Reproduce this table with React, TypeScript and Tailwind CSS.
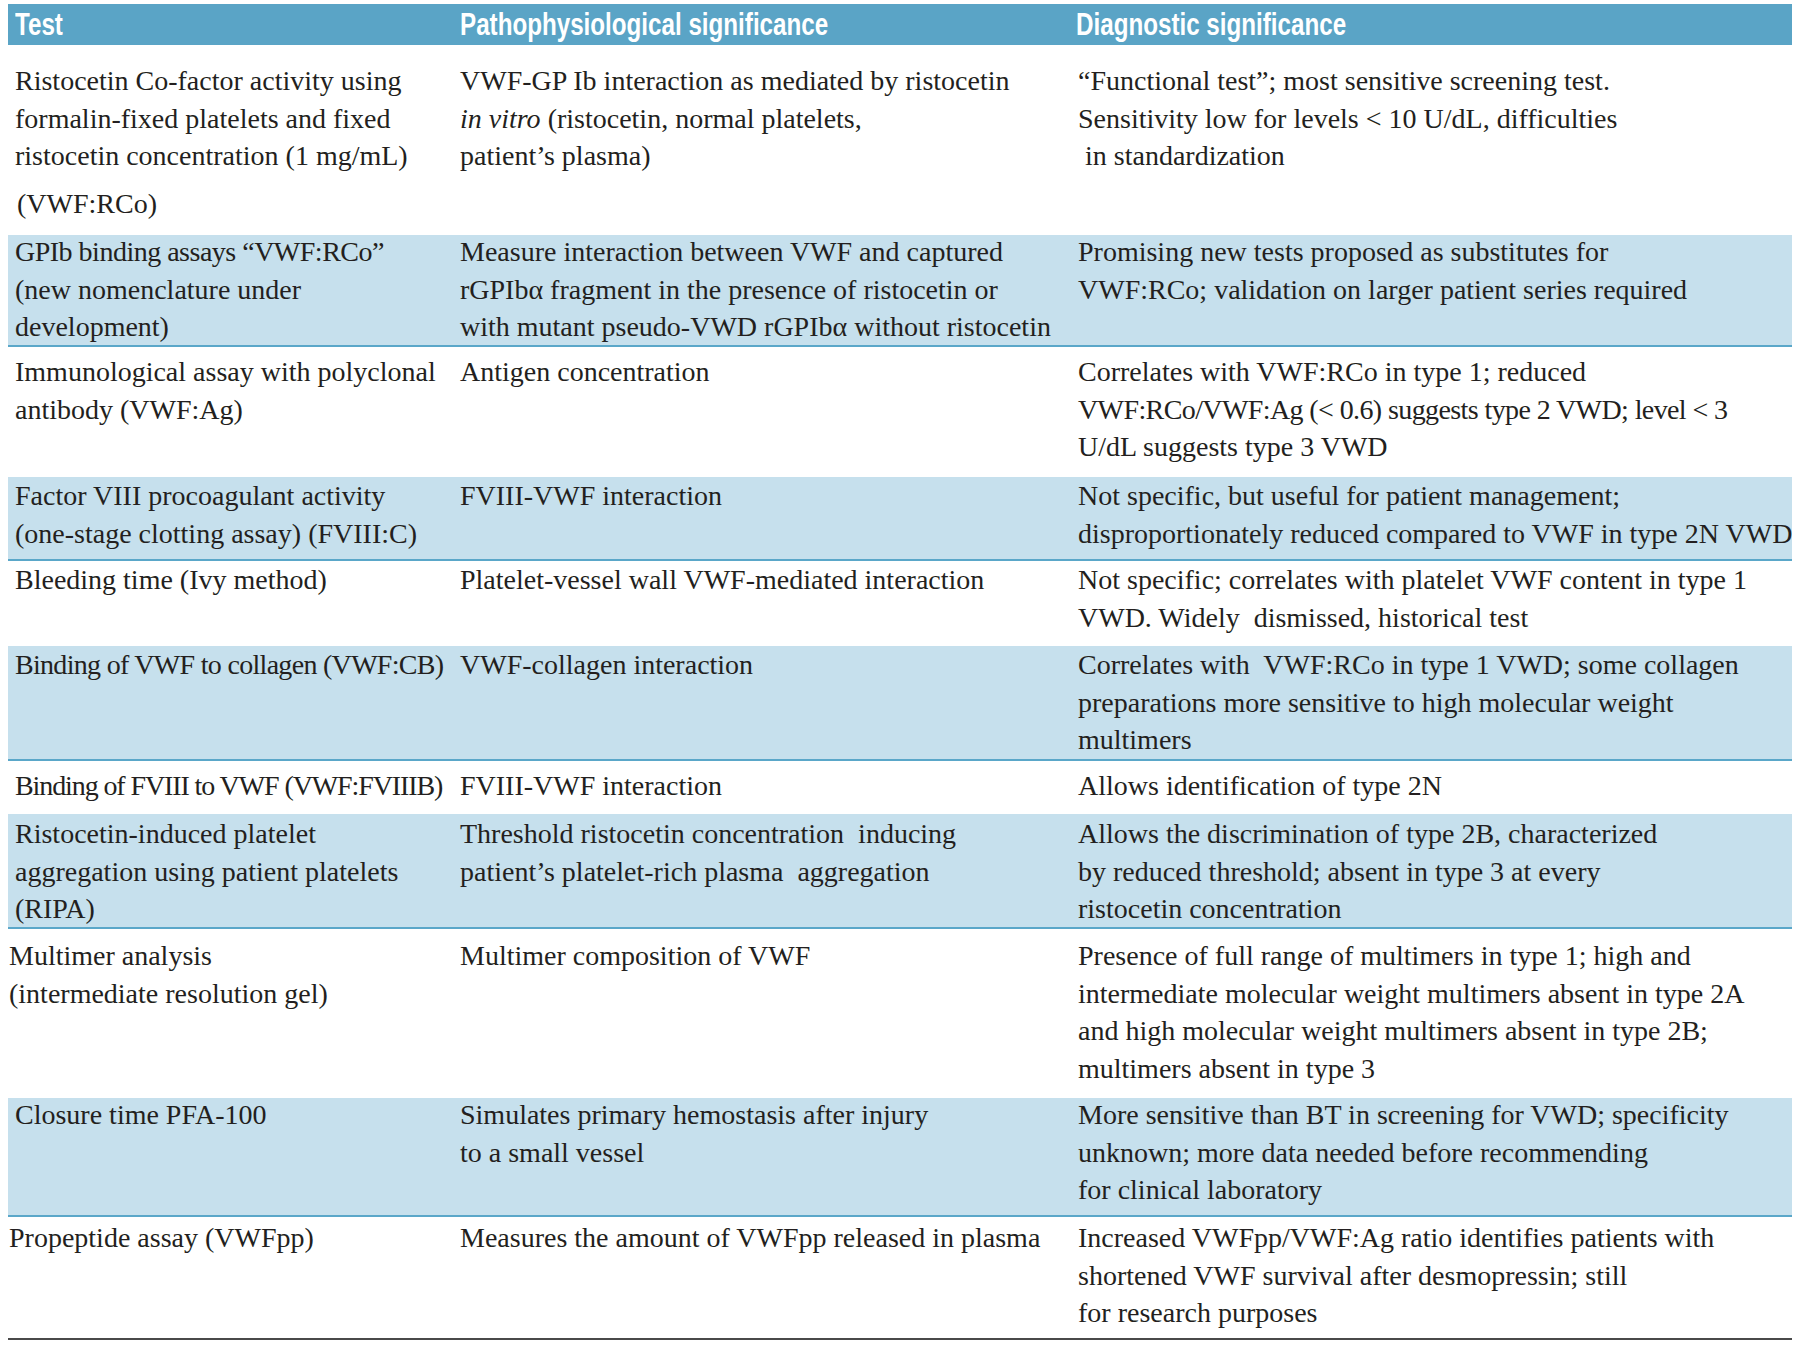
import React from "react";

type Row = {
  blue: boolean;
  h: string;
  pt: string;
  c1: React.ReactNode[];
  c2: React.ReactNode[];
  c3: React.ReactNode[];
  c1pl: string;
};

const rows: Row[] = [
  {
    blue: false,
    h: "h-[190px]",
    pt: "pt-[17px]",
    c1pl: "pl-[7px]",
    c1: [
      "Ristocetin Co-factor activity using",
      "formalin-fixed platelets and fixed",
      "ristocetin concentration (1 mg/mL)",
    ],
    c2: [
      "VWF-GP Ib interaction as mediated by ristocetin",
      <>
        <i>in vitro</i> (ristocetin, normal platelets,
      </>,
      "patient’s plasma)",
    ],
    c3: [
      "“Functional test”; most sensitive screening test.",
      "Sensitivity low for levels < 10 U/dL, difficulties",
      " in standardization",
    ],
  },
  {
    blue: true,
    h: "h-[112px]",
    pt: "-mt-[2px]",
    c1pl: "pl-[7px]",
    c1: [
      <span className="tracking-[-0.5px]">GPIb binding assays “VWF:RCo”</span>,
      "(new nomenclature under",
      "development)",
    ],
    c2: [
      "Measure interaction between VWF and captured",
      "rGPIbα fragment in the presence of ristocetin or",
      "with mutant pseudo-VWD rGPIbα without ristocetin",
    ],
    c3: [
      "Promising new tests proposed as substitutes for",
      "VWF:RCo; validation on larger patient series required",
    ],
  },
  {
    blue: false,
    h: "h-[130px]",
    pt: "pt-[6px]",
    c1pl: "pl-[7px]",
    c1: ["Immunological assay with polyclonal", "antibody (VWF:Ag)"],
    c2: ["Antigen concentration"],
    c3: [
      "Correlates with VWF:RCo in type 1; reduced",
      <span className="tracking-[-0.6px]">VWF:RCo/VWF:Ag (&lt; 0.6) suggests type 2 VWD; level &lt; 3</span>,
      "U/dL suggests type 3 VWD",
    ],
  },
  {
    blue: true,
    h: "h-[84px]",
    pt: "pt-[0px]",
    c1pl: "pl-[7px]",
    c1: ["Factor VIII procoagulant activity", "(one-stage clotting assay) (FVIII:C)"],
    c2: ["FVIII-VWF interaction"],
    c3: [
      "Not specific, but useful for patient management;",
      "disproportionately reduced compared to VWF in type 2N VWD",
    ],
  },
  {
    blue: false,
    h: "h-[85px]",
    pt: "pt-[0px]",
    c1pl: "pl-[7px]",
    c1: ["Bleeding time (Ivy method)"],
    c2: ["Platelet-vessel wall VWF-mediated interaction"],
    c3: [
      "Not specific; correlates with platelet VWF content in type 1",
      "VWD. Widely  dismissed, historical test",
    ],
  },
  {
    blue: true,
    h: "h-[115px]",
    pt: "pt-[0px]",
    c1pl: "pl-[7px]",
    c1: [<span className="tracking-[-0.7px]">Binding of VWF to collagen (VWF:CB)</span>],
    c2: ["VWF-collagen interaction"],
    c3: [
      "Correlates with  VWF:RCo in type 1 VWD; some collagen",
      "preparations more sensitive to high molecular weight",
      "multimers",
    ],
  },
  {
    blue: false,
    h: "h-[53px]",
    pt: "pt-[6px]",
    c1pl: "pl-[7px]",
    c1: [<span className="tracking-[-1.1px]">Binding of FVIII to VWF (VWF:FVIIIB)</span>],
    c2: ["FVIII-VWF interaction"],
    c3: ["Allows identification of type 2N"],
  },
  {
    blue: true,
    h: "h-[115px]",
    pt: "pt-[1px]",
    c1pl: "pl-[7px]",
    c1: ["Ristocetin-induced platelet", "aggregation using patient platelets", "(RIPA)"],
    c2: [
      "Threshold ristocetin concentration  inducing",
      "patient’s platelet-rich plasma  aggregation",
    ],
    c3: [
      "Allows the discrimination of type 2B, characterized",
      "by reduced threshold; absent in type 3 at every",
      "ristocetin concentration",
    ],
  },
  {
    blue: false,
    h: "h-[169px]",
    pt: "pt-[8px]",
    c1pl: "pl-[1px]",
    c1: ["Multimer analysis", "(intermediate resolution gel)"],
    c2: ["Multimer composition of VWF"],
    c3: [
      "Presence of full range of multimers in type 1; high and",
      "intermediate molecular weight multimers absent in type 2A",
      "and high molecular weight multimers absent in type 2B;",
      "multimers absent in type 3",
    ],
  },
  {
    blue: true,
    h: "h-[119px]",
    pt: "-mt-[2px]",
    c1pl: "pl-[7px]",
    c1: ["Closure time PFA-100"],
    c2: ["Simulates primary hemostasis after injury", "to a small vessel"],
    c3: [
      "More sensitive than BT in screening for VWD; specificity",
      "unknown; more data needed before recommending",
      "for clinical laboratory",
    ],
  },
  {
    blue: false,
    h: "h-[123px]",
    pt: "pt-[2px]",
    c1pl: "pl-[1px]",
    c1: ["Propeptide assay (VWFpp)"],
    c2: ["Measures the amount of VWFpp released in plasma"],
    c3: [
      "Increased VWFpp/VWF:Ag ratio identifies patients with",
      "shortened VWF survival after desmopressin; still",
      "for research purposes",
    ],
  },
];

function Lines({ lines }: { lines: React.ReactNode[] }) {
  return (
    <>
      {lines.map((l, i) => (
        <div key={i} className="whitespace-pre">
          {l}
        </div>
      ))}
    </>
  );
}

function Head({ children }: { children: React.ReactNode }) {
  return <span className="inline-block origin-left scale-x-[0.78] whitespace-nowrap">{children}</span>;
}

export default function App() {
  return (
    <div className="w-[1800px] h-[1350px] bg-white pt-[4px] px-[8px] font-['Liberation_Serif',serif] text-[28px] leading-[37.5px] text-[#231f20]">
      <div className="grid grid-cols-[452px_618px_1fr] h-[41px] bg-[#5aa4c6] text-white font-['Liberation_Sans',sans-serif] font-bold text-[31px] leading-[41px]">
        <div className="pl-[7px]">
          <Head>Test</Head>
        </div>
        <div>
          <Head>Pathophysiological significance</Head>
        </div>
        <div className="-ml-[2px]">
          <Head>Diagnostic significance</Head>
        </div>
      </div>
      {rows.map((r, idx) => (
        <div
          key={idx}
          className={`grid grid-cols-[452px_618px_1fr] ${r.h} ${
            r.blue ? "bg-[#c6e0ed] border-b-2 border-[#5aa7c9]" : "bg-white"
          } ${idx === rows.length - 1 ? "border-b-2 border-[#4a4a4a]" : ""}`}
        >
          <div className={`${r.c1pl} ${r.pt}`}>
            <Lines lines={r.c1} />
            {idx === 0 && <div className="mt-[10px] pl-[2px]">(VWF:RCo)</div>}
          </div>
          <div className={r.pt}>
            <Lines lines={r.c2} />
          </div>
          <div className={r.pt}>
            <Lines lines={r.c3} />
          </div>
        </div>
      ))}
    </div>
  );
}
